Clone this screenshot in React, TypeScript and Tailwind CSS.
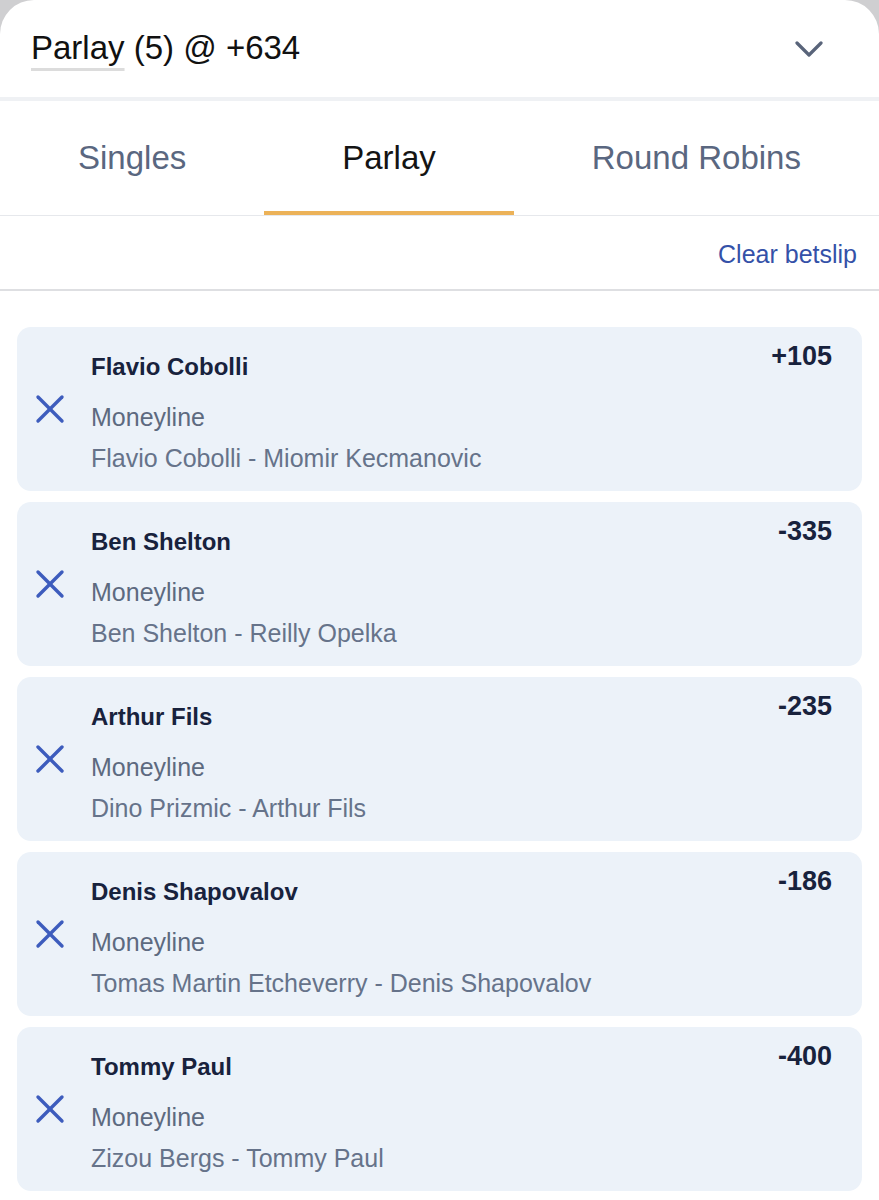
import { FC } from 'react';

type Leg = { name: string; odds: string; market: string; matchup: string };

const legs: Leg[] = [
  { name: 'Flavio Cobolli', odds: '+105', market: 'Moneyline', matchup: 'Flavio Cobolli - Miomir Kecmanovic' },
  { name: 'Ben Shelton', odds: '-335', market: 'Moneyline', matchup: 'Ben Shelton - Reilly Opelka' },
  { name: 'Arthur Fils', odds: '-235', market: 'Moneyline', matchup: 'Dino Prizmic - Arthur Fils' },
  { name: 'Denis Shapovalov', odds: '-186', market: 'Moneyline', matchup: 'Tomas Martin Etcheverry - Denis Shapovalov' },
  { name: 'Tommy Paul', odds: '-400', market: 'Moneyline', matchup: 'Zizou Bergs - Tommy Paul' },
];

const LegCard: FC<{ leg: Leg }> = ({ leg }) => {
  return (
    <div className="flex h-[164px] rounded-[14px] bg-[#ecf2f9]">
      <div className="flex w-[74px] shrink-0 items-center justify-center pr-[8px]">
        <svg width="30" height="30" viewBox="0 0 30 30" fill="none" stroke="#3d5cbd" strokeWidth="3.4" strokeLinecap="round">
          <path d="M3 3 L27 27" />
          <path d="M27 3 L3 27" />
        </svg>
      </div>
      <div className="flex flex-1 flex-col pt-[24px]">
        <div className="text-[24px] font-bold leading-[32px] text-[#18223d]">{leg.name}</div>
        <div className="mt-[17px] text-[25px] leading-[34px] text-[#5d6a80]">{leg.market}</div>
        <div className="mt-[7px] text-[25px] leading-[34px] text-[#66738a]">{leg.matchup}</div>
      </div>
      <div className="pr-[30px] pt-[12px] text-[27px] font-bold leading-[34px] text-[#18223d]">{leg.odds}</div>
    </div>
  );
};

const App: FC = () => {
  return (
    <div className="min-h-[1200px] bg-[#cfcfd1] font-['Liberation_Sans',Arial,sans-serif]">
      <div className="min-h-[1200px] rounded-t-[34px] bg-white">
        <div className="flex h-[97px] items-center justify-between pl-[31px] pr-[56px]">
          <div className="pb-[2px] text-[33px] leading-[40px] text-[#111111]">
            <span className="underline decoration-[#dcdcdc] decoration-[3px] underline-offset-[9px] [text-decoration-skip-ink:none]">Parlay</span>
            <span> (5) @ +634</span>
          </div>
          <svg width="28" height="18" viewBox="0 0 28 18" fill="none" stroke="#59647a" strokeWidth="3.2" strokeLinecap="round" strokeLinejoin="round">
            <path d="M2 3 L14 15 L26 3" />
          </svg>
        </div>
        <div className="h-[4px] bg-[#eff1f4]" />
        <div className="flex h-[115px] border-b border-[#e6e8ec]">
          <div className="flex items-center px-[78px] text-[33px] text-[#5a6780]">Singles</div>
          <div className="flex items-center border-b-[4px] border-[#ecb258] px-[78px] pt-[4px] text-[33px] text-[#141414]">Parlay</div>
          <div className="flex items-center px-[78px] text-[33px] text-[#5a6780]">Round Robins</div>
        </div>
        <div className="flex h-[75px] items-center justify-end border-b-2 border-[#dedfe2] pr-[22px] pt-[5px]">
          <span className="text-[25px] text-[#3451a8]">Clear betslip</span>
        </div>
        <div className="flex flex-col gap-[11px] px-[17px] pt-[36px]">
          {legs.map((leg) => (
            <LegCard key={leg.name} leg={leg} />
          ))}
        </div>
      </div>
    </div>
  );
};

export default App;
